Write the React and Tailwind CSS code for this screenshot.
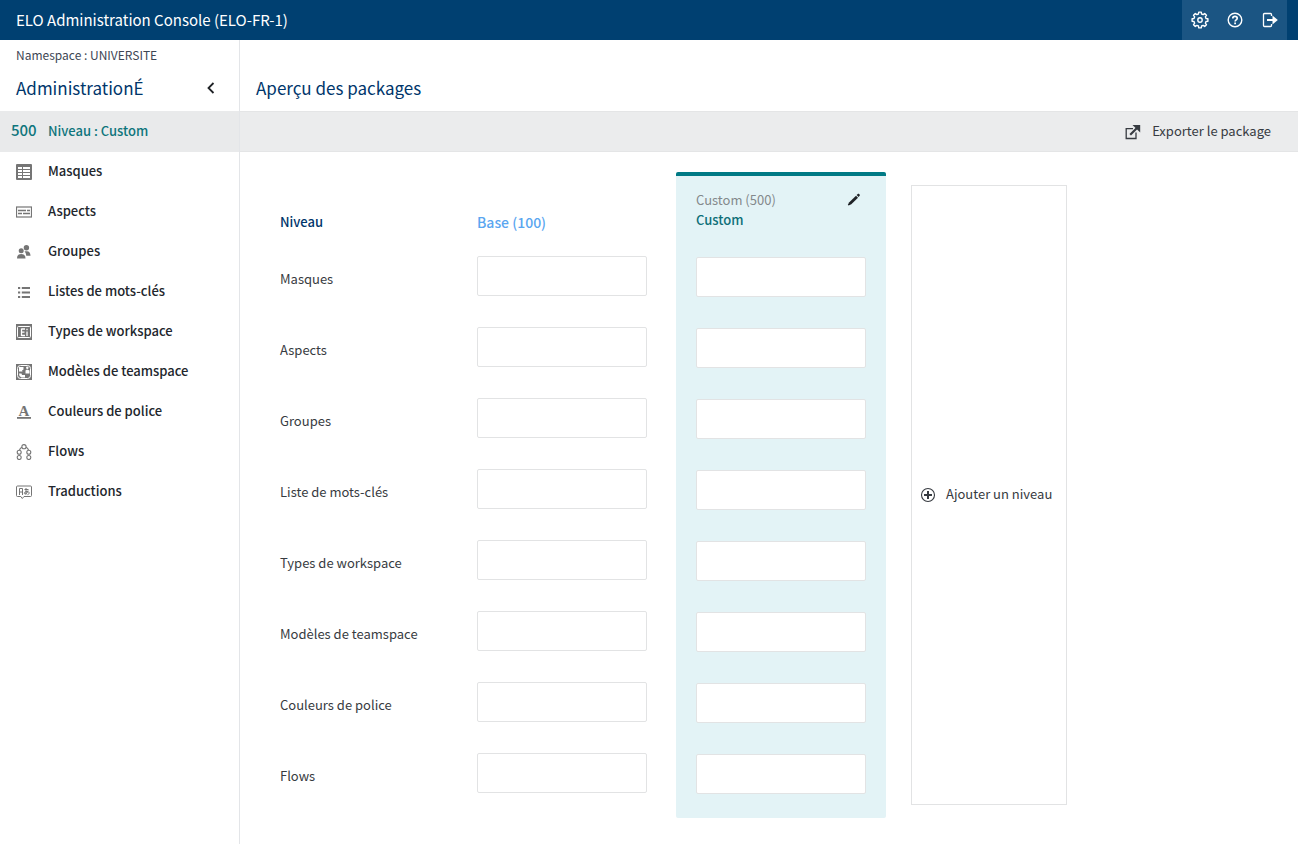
import React from 'react';

// Toothed wheel outline centred on (9, 9)
const gearOutline = (teeth, outer, inner) => {
  const step = (Math.PI * 2) / teeth;
  const points = [];
  for (let i = 0; i < teeth; i++) {
    const a = i * step;
    [[-0.32, inner], [-0.2, outer], [0.2, outer], [0.32, inner]].forEach(([t, r]) => {
      points.push(`${(9 + r * Math.sin(a + t * step)).toFixed(2)} ${(9 - r * Math.cos(a + t * step)).toFixed(2)}`);
    });
  }
  return `M${points.join('L')}Z`;
};

const GearIcon = () => (
  <svg width="18" height="18" viewBox="0 0 18 18" fill="none" stroke="currentColor" strokeWidth="1.4" strokeLinejoin="round" aria-hidden="true">
    <path d={gearOutline(8, 8, 6.2)} />
    <circle cx="9" cy="9" r="2.2" />
  </svg>
);

const HelpIcon = () => (
  <svg width="16" height="16" viewBox="0 0 16 16" fill="none" stroke="currentColor" aria-hidden="true">
    <circle cx="8" cy="8" r="6.8" strokeWidth="1.4" />
    <path d="M5.8 6.4C5.8 5 6.8 4.4 8 4.4s2.2.7 2.2 1.9c0 1.5-2.1 1.6-2.1 3.2" strokeWidth="1.7" />
    <path d="M7.2 10.6h1.8v1.6H7.2z" fill="currentColor" stroke="none" />
  </svg>
);

const LogoutIcon = () => (
  <svg width="16" height="16" viewBox="0 0 16 16" fill="none" stroke="currentColor" aria-hidden="true">
    <path d="M9.5 4V2.500a1 1 0 0 0-1-1H2.500a1 1 0 0 0-1 1v11a1 1 0 0 0 1 1h6a1 1 0 0 0 1-1V12" strokeWidth="1.3" />
    <path d="M5 8h7" strokeWidth="2" />
    <path d="M10.500 3.500 15.800 8l-5.300 4.500z" fill="currentColor" stroke="none" />
  </svg>
);

const ChevronIcon = () => (
  <svg width="16" height="16" viewBox="0 0 16 16" fill="none" stroke="currentColor" strokeWidth="1.8" aria-hidden="true">
    <path d="M10.500 3 5.500 8l5 5" />
  </svg>
);

const ExportIcon = () => (
  <svg width="16" height="16" viewBox="0 0 16 16" fill="none" stroke="currentColor" aria-hidden="true">
    <path d="M8 4.700H1.200v9.800H11V8.500" strokeWidth="1.3" />
    <path d="M5.200 10.800 12.500 3.500" strokeWidth="2.2" />
    <path d="M7.500 1H15.200v7.500z" fill="currentColor" stroke="none" />
  </svg>
);

const PencilIcon = () => (
  <svg width="14" height="14" viewBox="0 0 14 14" fill="currentColor" aria-hidden="true">
    <path d="M2.300 9.200 9 2.700l2 2L4.300 11.200l-2.700 1.300-.8-.7z" />
    <path d="M9.600 2.100 10.800 1c.4-.4.9-.4 1.300 0l.5.500c.4.400.4.900 0 1.300l-1 1.200z" />
  </svg>
);

const PlusCircleIcon = () => (
  <svg width="16" height="16" viewBox="0 0 16 16" fill="none" stroke="currentColor" aria-hidden="true">
    <circle cx="8" cy="8" r="6.500" strokeWidth="1.1" />
    <path d="M8 4v8M4 8h8" strokeWidth="2" />
  </svg>
);

const TableIcon = () => (
  <svg width="16" height="16" viewBox="0 0 16 16" aria-hidden="true">
    <rect width="16" height="16" rx="1" fill="currentColor" />
    <path d="M2 3h4v2H2zM7 3h7v2H7zM2 6h4v2H2zM7 6h7v2H7zM2 9h4v2H2zM7 9h7v2H7zM2 12h4v2H2zM7 12h7v2H7z" fill="#fff" />
  </svg>
);

const AspectIcon = () => (
  <svg width="16" height="16" viewBox="0 0 16 16" fill="none" stroke="currentColor" aria-hidden="true">
    <rect x=".5" y="3" width="15" height="10" strokeWidth="1.200" />
    <path d="M2 6.500h8M11 6.500h3M2 9.500h4M7 9.500h7" strokeWidth="1.600" />
  </svg>
);

const GroupIcon = () => (
  <svg width="16" height="16" viewBox="0 0 16 16" fill="currentColor" aria-hidden="true">
    <circle cx="10.400" cy="3.800" r="2.700" />
    <path d="M8.500 7.200h2.500c2.200 0 3.500 1.700 3.500 4.600h-4.300C10.200 10 9.500 8.300 8.500 7.200z" />
    <circle cx="5.200" cy="6.800" r="2.500" />
    <path d="M1 14.500C1 11.700 2.200 10 5.200 10s4.300 1.700 4.300 4.500z" />
  </svg>
);

const ListIcon = () => (
  <svg width="16" height="16" viewBox="0 0 16 16" stroke="currentColor" strokeWidth="1.800" aria-hidden="true">
    <path d="M2 4h2.200M5.800 4H14M2 8.500h2.200M5.800 8.500H14M2 13h2.200M5.800 13H14" />
  </svg>
);

const WorkspaceIcon = () => (
  <svg width="16" height="16" viewBox="0 0 16 16" aria-hidden="true">
    <rect width="16" height="16" fill="currentColor" />
    <rect x="1.500" y="2.500" width="13" height="11" rx="1" fill="none" stroke="#fff" />
    <path d="M5.500 4.500v7.500M9 5H5.500M8.500 8.200H5.500M9 11.500H5.500M11 7.500v4.500M11 4.800v1.400" fill="none" stroke="#fff" strokeWidth="1.300" />
  </svg>
);

const TeamspaceIcon = () => (
  <svg width="16" height="16" viewBox="0 0 16 16" aria-hidden="true">
    <rect width="16" height="16" fill="currentColor" />
    <rect x="1.500" y="1.500" width="13" height="13" rx="3" fill="none" stroke="#fff" />
    <path d="M3 3h4.500v2.500L6 6.500l.5 1H3zM9.500 6.500 11 5.500l2.500 1v3h-4zM3 9.500h2.500l.5 1.500h3v2.500H5.500L3.500 12z" fill="#fff" />
    <circle cx="11.300" cy="3.800" r="1.200" fill="#fff" />
  </svg>
);

const FontColorIcon = () => (
  <svg width="16" height="16" viewBox="0 0 16 16" fill="currentColor" aria-hidden="true">
    <text x="8" y="11.500" fontSize="15" fontWeight="700" textAnchor="middle" fontFamily="Liberation Serif, serif">A</text>
    <path d="M1 13h14v1.800H1z" />
  </svg>
);

const FlowIcon = () => (
  <svg width="16" height="16" viewBox="0 0 16 16" fill="none" stroke="currentColor" strokeWidth="1.100" aria-hidden="true">
    <circle cx="8" cy="2.700" r="2.100" />
    <circle cx="3.200" cy="8.200" r="2" />
    <circle cx="12.800" cy="8.200" r="2" />
    <circle cx="3.200" cy="13.500" r="2" />
    <circle cx="12.800" cy="13.500" r="2" />
    <path d="M6 3.200C4.500 3.800 3.800 4.800 3.500 6.200M10 3.200c1.500.6 2.200 1.600 2.500 3" />
  </svg>
);

const TranslationIcon = () => (
  <svg width="16" height="16" viewBox="0 0 16 16" fill="none" stroke="currentColor" strokeWidth="1" aria-hidden="true">
    <path d="M1.500 2h13a1 1 0 0 1 1 1v8.500a1 1 0 0 1-1 1H8L6.300 14.500 4.800 12.500H1.500a1 1 0 0 1-1-1V3a1 1 0 0 1 1-1z" />
    <path d="M3.500 11V4.500h3V11M3.500 8h3M8.500 5.500h4M10 4v6.500M12 6.500c-.5 2-1.500 3.500-3 3.500-1.500-.5-.5-2.500 2-2.500s3 2.500.5 3.200" />
  </svg>
);

const navItems = [
  { id: 'masks', label: 'Masques', icon: TableIcon },
  { id: 'aspects', label: 'Aspects', icon: AspectIcon },
  { id: 'groups', label: 'Groupes', icon: GroupIcon },
  { id: 'keywords', label: 'Listes de mots-clés', icon: ListIcon },
  { id: 'workspaces', label: 'Types de workspace', icon: WorkspaceIcon },
  { id: 'teamspaces', label: 'Modèles de teamspace', icon: TeamspaceIcon },
  { id: 'colors', label: 'Couleurs de police', icon: FontColorIcon },
  { id: 'flows', label: 'Flows', icon: FlowIcon },
  { id: 'translations', label: 'Traductions', icon: TranslationIcon }
];

const levelRows = [
  { id: 'masks', label: 'Masques' },
  { id: 'aspects', label: 'Aspects' },
  { id: 'groups', label: 'Groupes' },
  { id: 'keywords', label: 'Liste de mots-clés' },
  { id: 'workspaces', label: 'Types de workspace' },
  { id: 'teamspaces', label: 'Modèles de teamspace' },
  { id: 'colors', label: 'Couleurs de police' },
  { id: 'flows', label: 'Flows' }
];

const Header = () => (
  <header className="flex h-10 items-center justify-between bg-[#004071] text-white">
    <h1 className="px-4 text-[15px] leading-5">ELO Administration Console (ELO-FR-1)</h1>
    <div className="mr-[11px] flex h-10 items-center bg-[#1b5583]">
      <button type="button" aria-label="Configuration" className="flex h-10 w-[35px] items-center justify-center"><GearIcon /></button>
      <button type="button" aria-label="Aide" className="flex h-10 w-[35px] items-center justify-center"><HelpIcon /></button>
      <button type="button" aria-label="Déconnexion" className="flex h-10 w-[35px] items-center justify-center"><LogoutIcon /></button>
    </div>
  </header>
);

const Sidebar = () => (
  <aside className="w-60 shrink-0 border-r border-[#e3e5e8]">
    <p className="px-4 pt-[5px] text-xs leading-5 text-[#3d4654]">Namespace : UNIVERSITE</p>
    <div className="flex h-[46px] items-center justify-between pl-4 pr-5">
      <h2 className="text-[17px] leading-6 text-[#00366b]">AdministrationÉ</h2>
      <button type="button" aria-label="Réduire" className="text-[#1f2226]"><ChevronIcon /></button>
    </div>
    <a href="#level" className="flex h-[41px] items-center bg-[#e9eaeb] pb-0.5 pl-[11px] text-[13px] font-medium text-[#0e757c]">
      <span className="w-[37px] text-[15px]">500</span>
      <span>Niveau : Custom</span>
    </a>
    <nav>
      {navItems.map((item) => {
        const IconComponent = item.icon;
        return (
          <a key={item.id} href={`#${item.id}`} className="flex h-10 items-center gap-4 px-4 text-[13px] font-medium text-[#22262c]">
            <span className="text-[#757575]"><IconComponent /></span>
            <span className="pb-0.5">{item.label}</span>
          </a>
        );
      })}
    </nav>
  </aside>
);

const LevelInputs = ({ level }) => (
  <div className="flex flex-col gap-[31px]">
    {levelRows.map((row) => (
      <input
        key={row.id}
        id={`${level}-${row.id}`}
        type="text"
        aria-labelledby={`label-${row.id}`}
        className="h-10 w-[170px] rounded-xs border border-[#e2e3e4] bg-white px-2 text-[13px]"
      />
    ))}
  </div>
);

const Levels = () => (
  <div className="flex items-start px-10 py-5 text-[13px] text-[#373b41]">
    <div className="w-[197px] shrink-0 pt-[30px]">
      <h3 className="flex h-10 items-center font-medium text-[#00366b]">Niveau</h3>
      <div className="flex flex-col gap-[31px] pt-[17px]">
        {levelRows.map((row) => (
          <label key={row.id} id={`label-${row.id}`} htmlFor={`base-${row.id}`} className="flex h-10 items-center">
            {row.label}
          </label>
        ))}
      </div>
    </div>

    <section className="shrink-0 pt-[30px]">
      <h3 className="mb-[14px] flex h-10 items-center text-sm font-medium text-[#5aa6f0]">Base (100)</h3>
      <LevelInputs level="base" />
    </section>

    <section className="ml-[29px] shrink-0 rounded-xs border-t-4 border-[#007a85] bg-[#e3f3f6] px-5 pb-6 pt-[14px]">
      <div className="mb-[27px] flex items-start justify-between">
        <div className="leading-5">
          <p className="text-[#84898c]">Custom (500)</p>
          <h3 className="font-medium text-[#0e6f78]">Custom</h3>
        </div>
        <button type="button" aria-label="Modifier" className="px-[5px] py-[3px] text-[#1f2226]"><PencilIcon /></button>
      </div>
      <LevelInputs level="custom" />
    </section>

    <button type="button" className="my-[13px] ml-[25px] flex w-[156px] shrink-0 items-center gap-[10px] self-stretch border border-[#e2e3e4] pl-2">
      <PlusCircleIcon />
      <span className="pb-0.5">Ajouter un niveau</span>
    </button>
  </div>
);

const App = () => (
  <div className="flex min-h-screen flex-col bg-white font-['Noto_Sans_CJK_SC','Open_Sans',sans-serif]">
    <Header />
    <div className="flex grow">
      <Sidebar />
      <main className="min-w-0 grow">
        <div className="flex h-[71px] items-end px-4 pb-[11px]">
          <h2 className="text-[17px] leading-6 text-[#00366b]">Aperçu des packages</h2>
        </div>
        <div className="flex h-[41px] items-center justify-end border-y border-[#e4e5e6] bg-[#ebeced] pr-[27px]">
          <button type="button" className="flex items-center gap-[11px] text-[13px] text-[#373b41]">
            <ExportIcon />
            <span className="pb-0.5">Exporter le package</span>
          </button>
        </div>
        <Levels />
      </main>
    </div>
  </div>
);

export default App;
